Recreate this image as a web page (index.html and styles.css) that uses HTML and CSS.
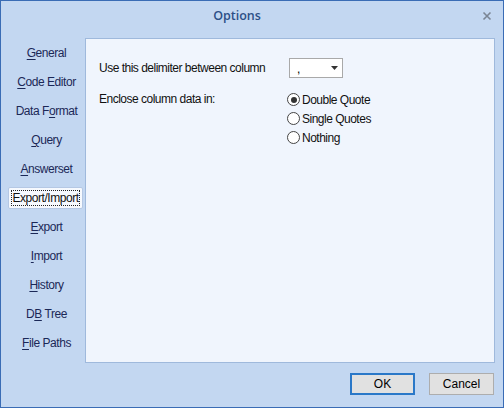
FILE: index.html
```html
<!DOCTYPE html>
<html>
<head>
<meta charset="utf-8">
<link rel="stylesheet" href="styles.css">
</head>
<body>
<div class="window">
  <div class="titlebar">
    <div class="title">Options</div>
    <div class="close">
      <svg width="10" height="10" viewBox="0 0 10 10"><path d="M1.5 1.5 L8.5 8.5 M8.5 1.5 L1.5 8.5" stroke="#7a8594" stroke-width="1.6" fill="none"/></svg>
    </div>
  </div>
  <div class="main">
    <div class="tabs">
      <div class="tab"><span><u>G</u>eneral</span></div>
      <div class="tab"><span><u>C</u>ode Editor</span></div>
      <div class="tab"><span>Data F<u>o</u>rmat</span></div>
      <div class="tab"><span><u>Q</u>uery</span></div>
      <div class="tab"><span><u>A</u>nswerset</span></div>
      <div class="tab selected"><span class="focus">Export/Import</span></div>
      <div class="tab"><span><u>E</u>xport</span></div>
      <div class="tab"><span><u>I</u>mport</span></div>
      <div class="tab"><span><u>H</u>istory</span></div>
      <div class="tab"><span>D<u>B</u> Tree</span></div>
      <div class="tab"><span><u>F</u>ile Paths</span></div>
    </div>
    <div class="panel">
      <div class="row first">
        <div class="label">Use this delimiter between column</div>
        <div class="combo">
          <span class="combo-value">,</span>
          <svg class="arrow" width="7" height="4" viewBox="0 0 7 4"><path d="M0 0 L7 0 L3.5 4 Z" fill="#333"/></svg>
        </div>
      </div>
      <div class="row second">
        <div class="label">Enclose column data in:</div>
        <div class="radios">
          <div class="radio"><span class="circle checked"></span><span>Double Quote</span></div>
          <div class="radio"><span class="circle"></span><span>Single Quotes</span></div>
          <div class="radio"><span class="circle"></span><span>Nothing</span></div>
        </div>
      </div>
    </div>
  </div>
  <div class="footer">
    <button class="btn default">OK</button>
    <button class="btn">Cancel</button>
  </div>
</div>
</body>
</html>
```
FILE: styles.css
```css
html, body {
  margin: 0;
  padding: 0;
}
body {
  font-family: "Liberation Sans", Arial, sans-serif;
  font-size: 12px;
  color: #000;
}
.window {
  width: 504px;
  height: 408px;
  box-sizing: border-box;
  border: 1px solid #3a6cb5;
  background: #c3d7f1;
  display: flex;
  flex-direction: column;
}
.titlebar {
  height: 37px;
  display: flex;
  align-items: flex-start;
  position: relative;
}
.title {
  flex: 1;
  text-align: center;
  padding-right: 30px;
  padding-top: 6px;
  font-family: "Open Sans", "Liberation Sans", sans-serif;
  font-weight: 600;
  font-size: 12.5px;
  color: #2c4f86;
}
.close {
  position: absolute;
  right: 11px;
  top: 10px;
  width: 10px;
  height: 10px;
}
.close svg { display: block; }
.main {
  display: flex;
  height: 325px;
}
.tabs {
  width: 84px;
  display: flex;
  flex-direction: column;
}
.tab {
  height: 29px;
  display: flex;
  align-items: center;
  justify-content: center;
  padding-left: 7px;
  color: #1b2857;
  letter-spacing: -0.45px;
  font-size: 12px;
}
.tab u {
  text-decoration-thickness: 1px;
  text-underline-offset: 2px;
}
.tab.selected {
  justify-content: flex-start;
  padding-left: 7px;
}
.tab.selected .focus {
  width: 75px;
  height: 22px;
  box-sizing: border-box;
  background: #f6f9fe;
  border: 1px solid #b5c8e4;
  border-radius: 2px;
  display: flex;
  align-items: center;
  justify-content: center;
  position: relative;
  color: #111;
}
.tab.selected .focus::after {
  content: "";
  position: absolute;
  left: 2px;
  right: 2px;
  top: 2px;
  bottom: 2px;
  border: 1px dotted #222;
}
.panel {
  width: 410px;
  box-sizing: border-box;
  border: 1px solid #9fb9dc;
  background: #f0f5fd;
  padding: 19px 0 0 13px;
  letter-spacing: -0.5px;
}
.row {
  display: flex;
}
.label {
  width: 190px;
  color: #111;
}
.row.first {
  align-items: center;
  height: 20px;
}
.row.first .label {
  padding-top: 0;
}
.combo {
  width: 54px;
  height: 20px;
  box-sizing: border-box;
  border: 1px solid #a9a9a9;
  background: #fff;
  display: flex;
  align-items: center;
  justify-content: space-between;
  padding: 0 4px 0 7px;
}
.combo-value {
  line-height: 1;
  padding-top: 2px;
}
.combo .arrow { display: block; }
.row.second {
  margin-top: 13px;
}
.row.second .label {
  padding-top: 1px;
}
.radios {
  display: flex;
  flex-direction: column;
  margin-left: -2px;
}
.radio {
  height: 19px;
  display: flex;
  align-items: center;
  color: #111;
  margin-top: -1px;
}
.radio + .radio { margin-top: 0; }
.circle {
  width: 13px;
  height: 13px;
  box-sizing: border-box;
  border: 1px solid #444;
  border-radius: 50%;
  background: #fff;
  margin-right: 2px;
  position: relative;
}
.circle.checked::after {
  content: "";
  position: absolute;
  left: 2.5px;
  top: 2.5px;
  width: 6px;
  height: 6px;
  border-radius: 50%;
  background: #333;
}
.footer {
  display: flex;
  justify-content: flex-end;
  padding: 10px 9px 0 0;
  gap: 14px;
}
.btn {
  font-family: "Liberation Sans", Arial, sans-serif;
  font-size: 12px;
  color: #000;
  width: 65px;
  height: 22px;
  box-sizing: border-box;
  border: 1px solid #adadad;
  background: #e1e1e1;
  margin: 0;
  padding: 0;
}
.btn.default {
  border: 2px solid #2a78c8;
  width: 65px;
}
```
